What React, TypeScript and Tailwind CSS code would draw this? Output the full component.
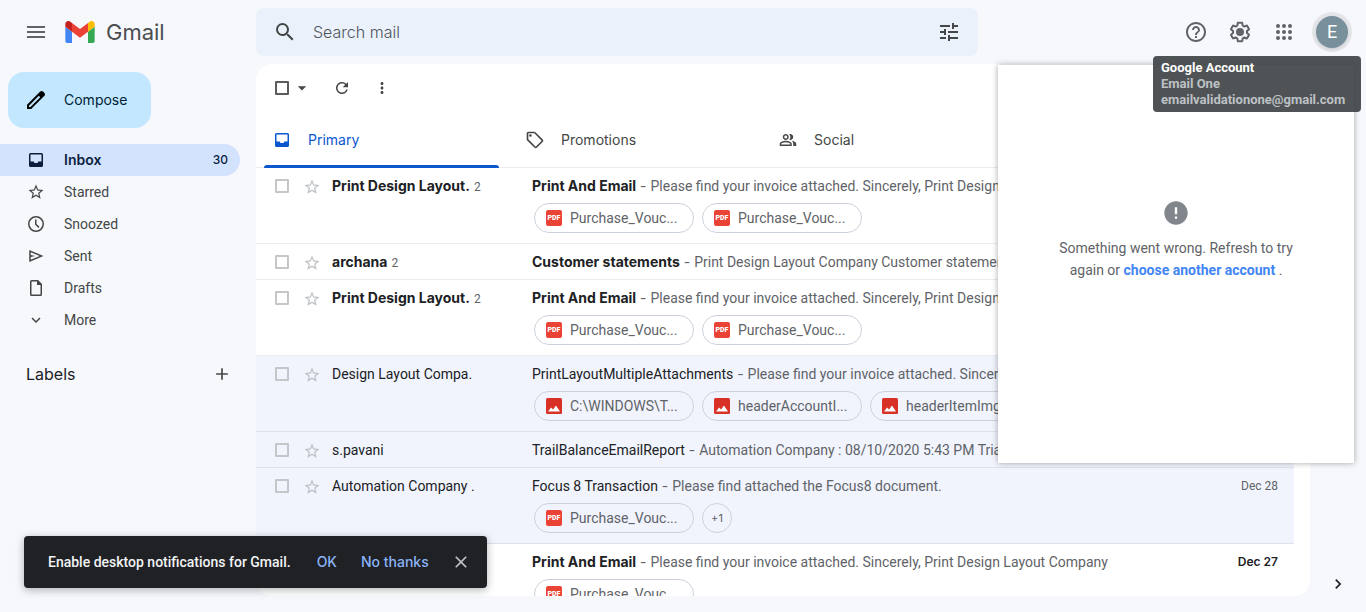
import type { ReactNode } from "react";
import {
  MdAdd,
  MdArrowDropDown,
  MdChevronRight,
  MdClose,
  MdError,
  MdExpandMore,
  MdHelpOutline,
  MdMenu,
  MdMoreVert,
  MdOutlinePeopleAlt,
  MdOutlineSell,
  MdRefresh,
  MdSearch,
  MdStarBorder,
  MdTune,
} from "react-icons/md";

type Chip = { kind: "pdf" | "image"; name: string };
type Mail = {
  from: string;
  count?: number;
  subject: string;
  snippet: string;
  date?: string;
  unread?: boolean;
  chips?: Chip[];
  extra?: string;
};

const invoice = "Please find your invoice attached. Sincerely, Print Design Layout Company";
const voucher: Chip = { kind: "pdf", name: "Purchase_Vouc..." };

const mails: Mail[] = [
  { from: "Print Design Layout.", count: 2, subject: "Print And Email", snippet: invoice, unread: true, chips: [voucher, voucher] },
  { from: "archana", count: 2, subject: "Customer statements", snippet: "Print Design Layout Company Customer statements", unread: true },
  { from: "Print Design Layout.", count: 2, subject: "Print And Email", snippet: invoice, unread: true, chips: [voucher, voucher] },
  {
    from: "Design Layout Compa.",
    subject: "PrintLayoutMultipleAttachments",
    snippet: invoice,
    chips: [
      { kind: "image", name: "C:\\WINDOWS\\T..." },
      { kind: "image", name: "headerAccountI..." },
      { kind: "image", name: "headerItemImg..." },
    ],
  },
  { from: "s.pavani", subject: "TrailBalanceEmailReport", snippet: "Automation Company : 08/10/2020 5:43 PM Trial Balance" },
  {
    from: "Automation Company .",
    subject: "Focus 8 Transaction",
    snippet: "Please find attached the Focus8 document.",
    date: "Dec 28",
    chips: [voucher],
    extra: "+1",
  },
  { from: "Print Design Layout.", subject: "Print And Email", snippet: invoice, date: "Dec 27", unread: true, chips: [voucher] },
];

function GmailLogo() {
  return (
    <svg viewBox="52 42 88 66" className="h-[22px] w-[30px]" aria-hidden="true">
      <path fill="#4285f4" d="M58 108h14V74L52 59v43c0 3.32 2.69 6 6 6" />
      <path fill="#34a853" d="M120 108h14c3.32 0 6-2.69 6-6V59l-20 15" />
      <path fill="#fbbc04" d="M120 48v26l20-15v-8c0-7.42-8.47-11.65-14.4-7.2" />
      <path fill="#ea4335" d="M72 74V48l24 18 24-18v26L96 92" />
      <path fill="#c5221f" d="M52 51v8l20 15V48l-5.6-4.2c-5.94-4.45-14.4-.22-14.4 7.2" />
    </svg>
  );
}

function GearIcon() {
  return (
    <svg viewBox="0 0 24 24" className="size-6" fill="currentColor" aria-hidden="true">
      <path d="M13.85 22.25h-3.7c-.74 0-1.36-.54-1.45-1.27l-.27-1.89c-.27-.14-.53-.29-.79-.46l-1.8.72c-.7.26-1.47-.03-1.81-.65L2.2 15.53c-.35-.66-.2-1.44.36-1.88l1.53-1.19c-.01-.15-.02-.3-.02-.46 0-.15.01-.31.02-.46l-1.52-1.19c-.59-.45-.74-1.26-.37-1.88l1.85-3.19c.34-.62 1.11-.9 1.79-.63l1.81.73c.26-.17.52-.32.78-.46l.27-1.91c.09-.7.71-1.25 1.44-1.25h3.7c.74 0 1.36.54 1.45 1.27l.27 1.89c.27.14.53.29.79.46l1.8-.72c.71-.26 1.48.03 1.82.65l1.84 3.18c.36.66.2 1.44-.36 1.88l-1.52 1.19c.01.15.02.3.02.46s-.01.31-.02.46l1.52 1.19c.56.45.72 1.23.37 1.86l-1.86 3.22c-.34.62-1.11.9-1.8.63l-1.8-.72c-.26.17-.52.32-.78.46l-.27 1.91c-.1.68-.72 1.22-1.46 1.22zm-3.23-2h2.76l.37-2.55.53-.22c.44-.18.88-.44 1.34-.78l.45-.34 2.38.96 1.38-2.4-2.03-1.58.07-.56c.03-.26.06-.51.06-.78s-.03-.53-.06-.78l-.07-.56 2.03-1.58-1.39-2.4-2.39.96-.45-.35c-.42-.32-.87-.58-1.33-.77l-.52-.22-.37-2.55h-2.76l-.37 2.55-.53.21c-.44.19-.88.44-1.34.79l-.45.33-2.38-.95-1.39 2.39 2.03 1.58-.07.56a7 7 0 0 0-.06.79c0 .26.02.53.06.78l.07.56-2.03 1.58 1.38 2.4 2.39-.96.45.35c.43.33.86.58 1.33.77l.53.22.38 2.55z" />
      <circle cx="12" cy="12" r="4" />
    </svg>
  );
}

function AppsIcon() {
  const stops = [6, 12, 18];
  return (
    <svg viewBox="0 0 24 24" className="size-6" fill="currentColor" aria-hidden="true">
      {stops.map((y) => stops.map((x) => <circle key={`${x}-${y}`} cx={x} cy={y} r="2" />))}
    </svg>
  );
}

function InboxIcon() {
  return (
    <svg viewBox="0 0 20 20" className="size-5" fill="currentColor" aria-hidden="true">
      <path
        fillRule="evenodd"
        d="M4.5 3h11A1.5 1.5 0 0 1 17 4.5v11a1.5 1.5 0 0 1-1.5 1.5h-11A1.5 1.5 0 0 1 3 15.5v-11A1.5 1.5 0 0 1 4.5 3Zm0 1.500v7h3.200l.8 1.600h3l.8-1.600h3.200v-7h-11Z"
      />
    </svg>
  );
}

function ClockIcon() {
  return (
    <svg viewBox="0 0 20 20" className="size-5" fill="none" stroke="currentColor" strokeWidth="1.500" aria-hidden="true">
      <circle cx="10" cy="10" r="7.250" />
      <path d="M9.750 5.500v4.700l3.200 3.200" />
    </svg>
  );
}

function SendIcon() {
  return (
    <svg viewBox="0 -960 960 960" className="size-[18px]" fill="currentColor" aria-hidden="true">
      <path d="M120-160v-640l760 320-760 320Zm80-120 474-200-474-200v140l240 60-240 60v140Z" />
    </svg>
  );
}

function FileIcon() {
  return (
    <svg viewBox="0 0 20 20" className="size-5" aria-hidden="true">
      <path d="M5.500 2.750h6.200l3.550 3.550v10.200a.75.75 0 0 1-.75.75h-9a.75.75 0 0 1-.75-.75v-13a.75.75 0 0 1 .75-.75Z" fill="none" stroke="currentColor" strokeWidth="1.500" />
      <path d="M11 2.500h1l3.500 3.500v1H11Z" fill="currentColor" />
    </svg>
  );
}

function PdfBadge() {
  return (
    <span className="flex size-4 shrink-0 items-center justify-center rounded-[2px] bg-[#ea4335] text-[7px] leading-none font-black text-white">
      PDF
    </span>
  );
}

function ImageBadge() {
  return (
    <svg viewBox="0 0 16 16" className="size-4 shrink-0" aria-hidden="true">
      <rect width="16" height="16" rx="1.500" fill="#d93025" />
      <path d="M2 13.500 5 9.500l2 2 3-4 4 6Z" fill="#fff" />
    </svg>
  );
}

function IconButton({ label, className, children }: { label: string; className: string; children: ReactNode }) {
  return (
    <button type="button" aria-label={label} className={`flex shrink-0 items-center justify-center ${className}`}>
      {children}
    </button>
  );
}

function Header() {
  return (
    <header className="flex h-16 shrink-0 items-center text-[#5f6368]">
      <div className="flex w-64 shrink-0 items-center pl-6">
        <IconButton label="Main menu" className="size-6">
          <MdMenu size={24} />
        </IconButton>
        <a href="#inbox" className="ml-[17px] flex items-center gap-[11px]">
          <GmailLogo />
          <span className="text-[22px] leading-7 text-[#4b4d50]">Gmail</span>
        </a>
      </div>
      <form role="search" className="flex h-12 max-w-[722px] min-w-0 flex-1 items-center rounded-lg bg-[#eaf1fb] px-[17px] text-[#444746]">
        <IconButton label="Search" className="size-6">
          <MdSearch size={24} />
        </IconButton>
        <input
          type="text"
          aria-label="Search mail"
          placeholder="Search mail"
          className="mx-4 min-w-0 flex-1 bg-transparent text-base font-light outline-none placeholder:text-[#50545a] placeholder:opacity-100"
        />
        <IconButton label="Show search options" className="size-6">
          <MdTune size={24} />
        </IconButton>
      </form>
      <div className="ml-auto flex items-center gap-5 pr-[14px]">
        <IconButton label="Support" className="size-6">
          <MdHelpOutline size={24} />
        </IconButton>
        <IconButton label="Settings" className="size-6">
          <GearIcon />
        </IconButton>
        <IconButton label="Google apps" className="size-6">
          <AppsIcon />
        </IconButton>
        <button
          type="button"
          aria-label="Google Account"
          aria-describedby="account-tip"
          className="-ml-1 flex size-10 items-center justify-center rounded-full bg-[#e3e5e9]"
        >
          <span className="flex size-8 items-center justify-center rounded-full bg-[#78909c] font-[Roboto,sans-serif] text-lg text-white shadow-sm">E</span>
        </button>
      </div>
    </header>
  );
}

const folders = [
  { name: "Inbox", icon: <InboxIcon />, count: 30 },
  { name: "Starred", icon: <MdStarBorder size={18} /> },
  { name: "Snoozed", icon: <ClockIcon /> },
  { name: "Sent", icon: <SendIcon /> },
  { name: "Drafts", icon: <FileIcon /> },
  { name: "More", icon: <MdExpandMore size={18} /> },
];

function Sidebar() {
  return (
    <aside className="w-64 shrink-0 pt-2">
      <button type="button" className="ml-2 flex h-14 items-center rounded-2xl bg-[#c2e7ff] pr-6 pl-4 text-sm text-[#001d35]">
        <svg viewBox="0 0 24 24" className="mr-4 size-6 text-black" fill="currentColor" aria-hidden="true">
          <path d="M20.410 4.940l-1.350-1.350c-.780-.780-2.050-.780-2.830 0L3 16.820V21h4.180L20.410 7.770c.790-.780.790-2.050 0-2.830zm-14 14.120L5 19v-1.360l9.820-9.820 1.410 1.410-9.820 9.830z" />
        </svg>
        Compose
      </button>
      <nav className="mt-4 pr-4">
        <ul>
          {folders.map((f) => (
            <li key={f.name}>
              <a
                href={`#${f.name.toLowerCase()}`}
                className={
                  f.count
                    ? "flex h-8 items-center rounded-r-full bg-[#d3e3fd] pr-3 pl-[26px] text-sm font-semibold text-[#0b1e3d]"
                    : "flex h-8 items-center pr-3 pl-[26px] font-[Roboto,sans-serif] text-sm text-[#444746]"
                }
              >
                <span className="mr-[18px] flex size-5 items-center justify-center">{f.icon}</span>
                <span className="flex-1">{f.name}</span>
                {f.count && <span className="text-xs font-medium">{f.count}</span>}
              </a>
            </li>
          ))}
        </ul>
      </nav>
      <div className="mt-[26px] flex items-center justify-between pr-6 pl-[26px]">
        <h2 className="text-base text-[#202124]">Labels</h2>
        <IconButton label="Create new label" className="size-5 text-[#444746]">
          <MdAdd size={20} />
        </IconButton>
      </div>
    </aside>
  );
}

function Toolbar() {
  return (
    <div className="flex h-12 items-center pl-[19px] text-[#444746]">
      <input type="checkbox" aria-label="Select all" className="size-[14px] appearance-none rounded-[1px] border-2 border-[#5a5d5c]" />
      <IconButton label="Select options" className="ml-[3px] size-5">
        <MdArrowDropDown size={20} />
      </IconButton>
      <IconButton label="Refresh" className="ml-5 size-5">
        <MdRefresh size={18} />
      </IconButton>
      <IconButton label="More options" className="ml-5 size-5">
        <MdMoreVert size={18} />
      </IconButton>
    </div>
  );
}

const tabs = [
  { name: "Primary", icon: <InboxIcon /> },
  { name: "Promotions", icon: <MdOutlineSell size={20} /> },
  { name: "Social", icon: <MdOutlinePeopleAlt size={18} /> },
];

function Tabs() {
  return (
    <div role="tablist" className="mr-4 flex h-14 border-b border-[#e9ebee]">
      {tabs.map((t, i) => (
        <button
          key={t.name}
          type="button"
          role="tab"
          aria-selected={i === 0}
          className={
            i === 0
              ? "relative flex w-[253px] items-center pl-4 text-sm text-[#0b57d0]"
              : "relative flex w-[253px] items-center pl-4 text-sm text-[#444746]"
          }
        >
          <span className="mr-4 flex size-5 items-center justify-center">{t.icon}</span>
          {t.name}
          {i === 0 && <span className="absolute right-[10px] -bottom-px left-2 h-[3px] rounded-t-[3px] bg-[#0b57d0]" />}
        </button>
      ))}
    </div>
  );
}

function MailRow({ mail, index }: { mail: Mail; index: number }) {
  const titleClass = mail.unread ? "font-[Inter,sans-serif] font-bold text-[#202124]" : "text-[#202124]";
  return (
    <li
      className={
        mail.unread
          ? "mr-4 border-b border-[#e9ebee] bg-white"
          : "mr-4 border-b border-[#dde3ec] bg-[#f1f4fd]"
      }
    >
      <div className="flex h-[35px] items-center pr-4 pl-[19px] font-[Roboto,sans-serif]">
        <input
          type="checkbox"
          aria-label={`Select conversation ${index + 1}`}
          className="mt-px size-[14px] shrink-0 appearance-none rounded-[1px] border-2 border-[#c4c7c9]"
        />
        <IconButton label="Not starred" className="mt-[2px] ml-[14px] size-[18px] text-[#bdc0c3]">
          <MdStarBorder size={18} />
        </IconButton>
        <div className="ml-[11px] w-[200px] shrink-0 truncate text-sm">
          <span className={titleClass}>{mail.from}</span>
          {mail.count && <span className="ml-1 text-xs text-[#5f6368]">{mail.count}</span>}
        </div>
        <div className="min-w-0 flex-1 truncate text-sm text-[#5f6368]">
          <span className={titleClass}>{mail.subject}</span>
          <span className="font-[Inter,sans-serif]">{" - "}</span>
          {mail.snippet}
        </div>
        {mail.date && (
          <time className={mail.unread ? "ml-4 font-[Inter,sans-serif] text-xs font-semibold text-[#202124]" : "ml-4 text-xs text-[#5f6368]"}>
            {mail.date}
          </time>
        )}
      </div>
      {mail.chips && (
        <div className="flex gap-2 pb-[10px] pl-[278px]">
          {mail.chips.map((c, i) => (
            <button
              key={i}
              type="button"
              className="flex h-[30px] w-40 items-center gap-2 rounded-full border border-[#cbd2dc] pl-[11px] font-[Roboto,sans-serif] text-sm text-[#5f6368]"
            >
              {c.kind === "pdf" ? <PdfBadge /> : <ImageBadge />}
              <span className="whitespace-nowrap">{c.name}</span>
            </button>
          ))}
          {mail.extra && (
            <button type="button" className="flex size-[30px] items-center justify-center rounded-full border border-[#cbd2dc] text-[11px] text-[#5f6368]">
              {mail.extra}
            </button>
          )}
        </div>
      )}
    </li>
  );
}

function AccountPanel() {
  return (
    <section
      aria-label="Account"
      className="absolute top-[65px] right-3 h-[398px] w-[356px] bg-white px-12 pt-[136px] text-center font-[Roboto,sans-serif] text-sm text-[#5f6368] shadow-[0_0_6px_rgba(0,0,0,0.35)]"
    >
      <MdError size={28} className="mx-auto -mt-[2px] text-[#80868b]" />
      <p className="mt-[10px] leading-[22px]">
        Something went wrong. Refresh to try again or{" "}
        <a href="#accounts" className="font-bold text-[#4285f4]">
          choose another account
        </a>{" "}
        .
      </p>
    </section>
  );
}

function AccountTooltip() {
  return (
    <div
      id="account-tip"
      role="tooltip"
      className="absolute top-14 right-[5px] w-52 rounded bg-[#3c4043]/90 px-2 py-1 font-[Roboto,sans-serif] text-[13px] leading-4 font-bold text-[#bdc1c6]"
    >
      <p className="text-white">Google Account</p>
      <p>Email One</p>
      <p>emailvalidationone@gmail.com</p>
    </div>
  );
}

function Toast() {
  return (
    <div
      role="status"
      className="absolute bottom-6 left-6 flex h-[52px] items-center rounded bg-[#202124] pr-4 pl-6 text-sm font-medium text-[#8ab4f8] shadow-[0_2px_8px_rgba(60,64,67,0.4)]"
    >
      <span className="font-[Roboto,sans-serif] text-[#f1f3f4]">Enable desktop notifications for Gmail.</span>
      <button type="button" className="ml-[26px]">
        OK
      </button>
      <button type="button" className="ml-6">
        No thanks
      </button>
      <IconButton label="Close" className="ml-[22px] size-5 text-[#bdc1c6]">
        <MdClose size={20} />
      </IconButton>
    </div>
  );
}

export default function App() {
  return (
    <div className="relative flex h-screen flex-col overflow-hidden bg-[#f6f8fc] font-[Inter,Roboto,sans-serif]">
      <Header />
      <div className="flex min-h-0 flex-1">
        <Sidebar />
        <main className="mb-4 min-w-0 flex-1 overflow-hidden rounded-2xl bg-white">
          <Toolbar />
          <Tabs />
          <ul>
            {mails.map((m, i) => (
              <MailRow key={i} mail={m} index={i} />
            ))}
          </ul>
        </main>
        <div className="flex w-14 shrink-0 items-end justify-center pb-[18px]">
          <IconButton label="Show side panel" className="size-5 text-[#202124]">
            <MdChevronRight size={20} />
          </IconButton>
        </div>
      </div>
      <AccountPanel />
      <AccountTooltip />
      <Toast />
    </div>
  );
}
